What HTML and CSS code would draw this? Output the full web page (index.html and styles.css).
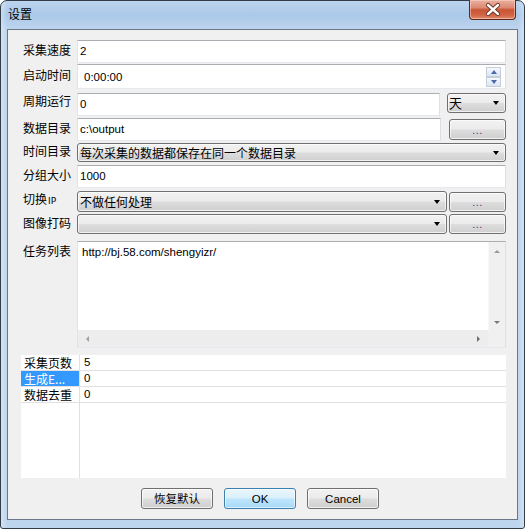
FILE: index.html
```html
<!DOCTYPE html>
<html lang="zh-CN">
<head>
<meta charset="utf-8">
<title>设置</title>
<link rel="stylesheet" href="styles.css">
</head>
<body>
<div class="window">
  <div class="titlebar">
    <span class="title">设置</span>
    <div class="close">
      <svg width="46" height="19" viewBox="0 0 46 19">
        <path d="M18.5 5 L28.5 14 M28.5 5 L18.5 14" stroke="#6a3426" stroke-width="4.4" stroke-linecap="round" fill="none"/>
        <path d="M18.5 5 L28.5 14 M28.5 5 L18.5 14" stroke="#ffffff" stroke-width="2.6" stroke-linecap="round" fill="none"/>
      </svg>
    </div>
  </div>
  <div class="client">
    <div class="row r-speed">
      <div class="label">采集速度</div>
      <div class="tb grow"><span class="val">2</span></div>
    </div>
    <div class="row r-start">
      <div class="label">启动时间</div>
      <div class="tb grow tb-time">
        <span class="val val-time">0:00:00</span>
        <div class="spin">
          <div class="spin-btn"><span class="tri-up"></span></div>
          <div class="spin-btn"><span class="tri-down"></span></div>
        </div>
      </div>
    </div>
    <div class="row r-cycle">
      <div class="label">周期运行</div>
      <div class="tb grow"><span class="val">0</span></div>
      <div class="day"><span class="day-text">天</span><span class="arrow"></span></div>
    </div>
    <div class="row r-dir">
      <div class="label">数据目录</div>
      <div class="tb grow"><span class="val">c:\output</span></div>
      <div class="btn dots dots-dir">...</div>
    </div>
    <div class="row r-timedir">
      <div class="label">时间目录</div>
      <div class="cb grow"><span class="cb-text">每次采集的数据都保存在同一个数据目录</span><span class="arrow"></span></div>
    </div>
    <div class="row r-group">
      <div class="label">分组大小</div>
      <div class="tb grow"><span class="val">1000</span></div>
    </div>
    <div class="row r-ip">
      <div class="label">切换<span class="small-latin">IP</span></div>
      <div class="cb grow"><span class="cb-text">不做任何处理</span><span class="arrow"></span></div>
      <div class="btn dots">...</div>
    </div>
    <div class="row r-captcha">
      <div class="label">图像打码</div>
      <div class="cb grow"><span class="cb-text"></span><span class="arrow"></span></div>
      <div class="btn dots">...</div>
    </div>
    <div class="row r-tasks">
      <div class="label label-top">任务列表</div>
      <div class="ta grow">
        <div class="ta-content">http://bj.58.com/shengyizr/</div>
        <div class="vscroll"><span class="s-up"></span><span class="s-down"></span></div>
        <div class="hscroll"><span class="s-left"></span><span class="s-right"></span></div>
        <div class="corner"></div>
      </div>
    </div>
    <div class="propgrid">
      <div class="prow"><div class="pname">采集页数</div><div class="pval">5</div></div>
      <div class="prow"><div class="pname selected">生成E...</div><div class="pval">0</div></div>
      <div class="prow"><div class="pname">数据去重</div><div class="pval">0</div></div>
    </div>
    <div class="buttons">
      <div class="btn pbtn">恢复默认</div>
      <div class="btn pbtn default">OK</div>
      <div class="btn pbtn">Cancel</div>
    </div>
  </div>
</div>
</body>
</html>
```
FILE: styles.css
```css
* { box-sizing: border-box; }
html, body { margin: 0; padding: 0; }
body {
  width: 525px;
  height: 529px;
  overflow: hidden;
  background: #ffffff;
  font-family: "Liberation Sans", "Noto Sans CJK SC", sans-serif;
  font-size: 12px;
  color: #000;
}
.window {
  width: 525px;
  height: 529px;
  border: 1px solid #333d48;
  border-radius: 7px 7px 3px 3px;
  background:
    linear-gradient(to right, rgba(255,255,255,0.35) 0, rgba(255,255,255,0) 6px, rgba(255,255,255,0) 517px, rgba(255,255,255,0.3) 523px),
    linear-gradient(to bottom, #bcd4ee 0, #abc9e9 14px, #bdd4ee 28px, #bed5ee 100%);
  display: flex;
  flex-direction: column;
}
.titlebar {
  height: 28px;
  display: flex;
  align-items: flex-start;
  padding-left: 7px;
}
.title {
  margin-top: 5px;
  font-family: "Noto Sans CJK SC", sans-serif;
  font-size: 12px;
  line-height: 16px;
}
.close {
  margin-left: auto;
  margin-right: 8px;
  width: 47px;
  height: 20px;
  margin-top: -1px;
  border: 1px solid #5b2a1f;
  border-top: none;
  border-radius: 0 0 4px 4px;
  background: linear-gradient(to bottom, #eab0a0 0%, #dc8a74 40%, #c85535 52%, #d26443 80%, #e08d6c 100%);
  box-shadow: inset 0 0 0 1px rgba(255,220,210,0.5);
  display: flex;
  align-items: center;
  justify-content: center;
}
.close svg { display: block; }
.client {
  flex: 1;
  margin: 0 6px 8px;
  border: 1px solid #6b7888;
  background: #f0f0f0;
  display: flex;
  flex-direction: column;
  padding-right: 11px;
}
.row {
  display: flex;
  align-items: center;
}
.grow { flex: 1; }
.label {
  width: 69px;
  flex: none;
  padding-left: 15px;
  padding-bottom: 3px;
  font-family: "Noto Sans CJK SC", sans-serif;
  font-size: 12px;
  line-height: 16px;
  white-space: nowrap;
}
.small-latin {
  font-family: "DejaVu Sans", sans-serif;
  font-size: 9px;
  margin-left: 1px;
}
.label-top { align-self: flex-start; padding-top: 2px; }
.r-speed { margin-top: 10px; height: 23px; }
.r-start { margin-top: 1px; height: 25px; }
.r-cycle { margin-top: 4px; height: 23px; align-items: flex-start; }
.r-dir { margin-top: 2px; height: 23px; }
.r-timedir { margin-top: 2px; height: 19px; }
.r-group { margin-top: 3px; height: 23px; }
.r-ip { margin-top: 3px; height: 21px; }
.r-captcha { margin-top: 2px; height: 20px; }
.r-tasks { margin-top: 7px; height: 107px; align-items: stretch; }
.row > .tb, .row > .cb { height: 100%; }

.tb {
  background: #ffffff;
  border: 1px solid;
  border-color: #abadb3 #dbdfe6 #e3e9ef #e2e3ea;
  display: flex;
  align-items: center;
  padding-left: 2px;
  padding-bottom: 2px;
}
.val {
  font-size: 11.5px;
  line-height: 14px;
}
.val-time { padding-left: 4px; }
.tb-time { padding-bottom: 0; }
.spin {
  margin-left: auto;
  margin-right: 4px;
  display: flex;
  flex-direction: column;
}
.spin-btn {
  width: 15px;
  height: 10px;
  border: 1px solid #c3cedc;
  background: linear-gradient(to bottom, #f7f9fc 0%, #e8eef6 50%, #dde5f0 100%);
  display: flex;
  align-items: center;
  justify-content: center;
}
.tri-up, .tri-down {
  width: 0; height: 0;
  border-left: 3.5px solid transparent;
  border-right: 3.5px solid transparent;
}
.tri-up { border-bottom: 4px solid #4a6aa8; }
.tri-down { border-top: 4px solid #4a6aa8; }

.cb, .btn, .day {
  border: 1px solid #707070;
  border-radius: 3px;
  background: linear-gradient(to bottom, #f2f2f2 0%, #ebebeb 48%, #dddddd 52%, #cfcfcf 100%);
  box-shadow: inset 0 0 0 1px rgba(255,255,255,0.7);
}
.cb {
  display: flex;
  align-items: center;
  padding-left: 2px;
  min-width: 0;
}
.cb-text {
  font-family: "Noto Sans CJK SC", sans-serif;
  font-size: 12px;
  line-height: 16px;
  white-space: nowrap;
  overflow: hidden;
}
.arrow {
  margin-left: auto;
  margin-right: 6px;
  flex: none;
  width: 0; height: 0;
  border-left: 3.5px solid transparent;
  border-right: 3.5px solid transparent;
  border-top: 4px solid #000;
}
.day {
  width: 59px;
  height: 20px;
  margin-left: 7px;
  flex: none;
  display: flex;
  align-items: center;
  padding-left: 1px;
}
.day-text {
  font-family: "Noto Sans CJK SC", sans-serif;
  font-size: 13px;
  line-height: 16px;
}
.dots {
  width: 57px;
  height: 20px;
  margin-left: 2px;
  flex: none;
  display: flex;
  justify-content: center;
  align-items: flex-end;
  padding-bottom: 3px;
  color: #4b2c8c;
  font-size: 11px;
  line-height: 11px;
  letter-spacing: 0.5px;
}
.dots-dir { margin-left: 8px; height: 21px; }

.ta {
  background: #ffffff;
  border: 1px solid;
  border-color: #abadb3 #dbdfe6 #e3e9ef #e2e3ea;
  display: grid;
  grid-template-columns: 1fr 17px;
  grid-template-rows: 1fr 17px;
}
.ta-content {
  padding: 3px 4px;
  font-size: 11.5px;
  line-height: 14px;
}
.vscroll {
  background: #f0f0f0;
  border-left: 1px solid #f8f8f8;
  display: flex;
  flex-direction: column;
  align-items: center;
  justify-content: space-between;
  padding: 8px 0 6px;
}
.hscroll {
  background: #ededed;
  display: flex;
  align-items: center;
  justify-content: space-between;
  padding: 0 8px;
}
.corner { background: #f0f0f0; }
.s-up, .s-down, .s-left, .s-right { width: 0; height: 0; }
.s-up { border-left: 3.5px solid transparent; border-right: 3.5px solid transparent; border-bottom: 3px solid #9a9a9a; }
.s-down { border-left: 3.5px solid transparent; border-right: 3.5px solid transparent; border-top: 3px solid #7a7a7a; }
.s-left { border-top: 3.5px solid transparent; border-bottom: 3.5px solid transparent; border-right: 3px solid #a0a0a0; }
.s-right { border-top: 3.5px solid transparent; border-bottom: 3.5px solid transparent; border-left: 3px solid #6e6e6e; }

.propgrid {
  margin: 7px 0 0 13px;
  height: 123px;
  background:
    linear-gradient(to right, transparent 58px, #e0e0e0 58px, #e0e0e0 59px, transparent 59px),
    #ffffff;
  display: flex;
  flex-direction: column;
}
.prow {
  height: 16px;
  display: flex;
  border-bottom: 1px solid #e0e0e0;
}
.pname {
  width: 58px;
  padding-left: 3px;
  font-family: "Noto Sans CJK SC", sans-serif;
  font-size: 12px;
  line-height: 15px;
  white-space: nowrap;
  overflow: hidden;
}
.pname.selected { background: #3399ff; color: #ffffff; }
.pval {
  margin-left: 1px;
  padding-left: 4px;
  font-size: 11.5px;
  line-height: 15px;
}

.buttons {
  margin-top: 10px;
  display: flex;
  justify-content: center;
  gap: 11px;
  padding-left: 6px;
}
.pbtn {
  width: 72px;
  height: 21px;
  display: flex;
  align-items: center;
  justify-content: center;
  font-size: 11.5px;
  line-height: 14px;
}
.pbtn.default {
  border-color: #3c7fb1;
  background: linear-gradient(to bottom, #eaf6fd 0%, #d9f0fc 48%, #bee6fd 52%, #a7d9f5 100%);
  box-shadow: inset 0 0 0 1px rgba(255,255,255,0.6);
}
```
